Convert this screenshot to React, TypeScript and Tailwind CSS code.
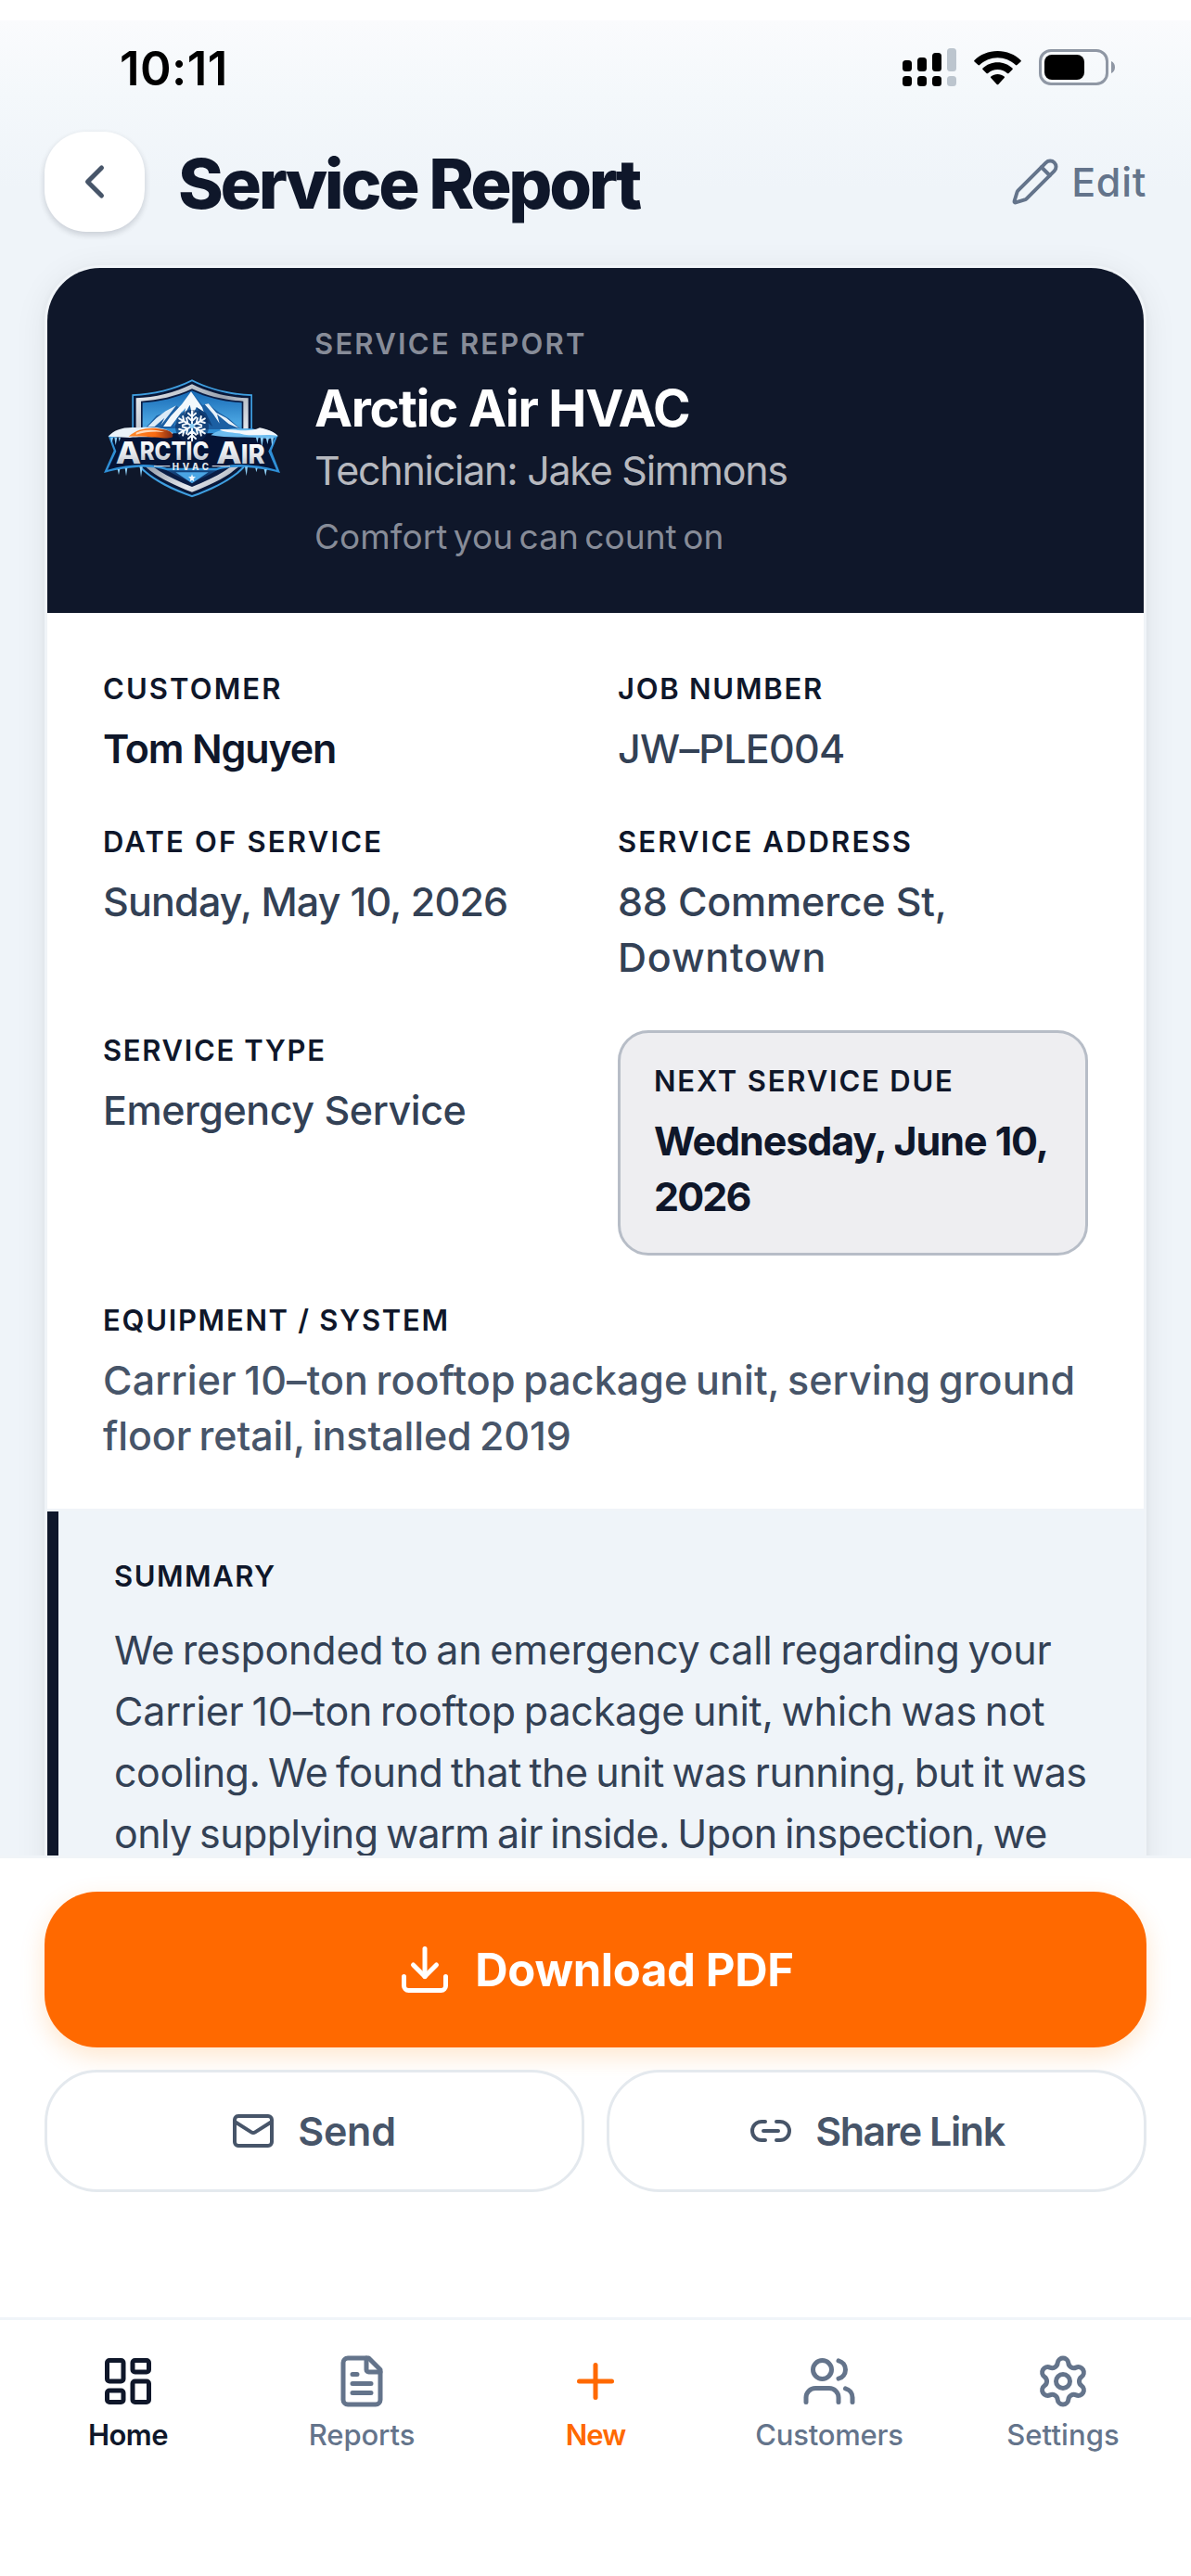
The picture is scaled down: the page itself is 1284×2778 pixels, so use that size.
import React from "react";
import { ChevronLeft, Download, Link2, Pencil, Plus, Settings, Users } from "lucide-react";

function StatusBar() {
  return (
    <div className="flex h-[102px] items-center justify-between pr-[82px] pl-[129px]">
      <span className="text-[51px] leading-none font-semibold tracking-[0.4px] text-black">
        10:11
      </span>
      <div className="flex items-center gap-[19px]">
        <svg width="58" height="42" viewBox="0 0 58 42" fill="#000">
          <rect x="0" y="13" width="10" height="12" rx="3.5" />
          <rect x="16" y="10" width="10" height="15" rx="3.5" />
          <rect x="32" y="5" width="10" height="20" rx="3.5" />
          <rect x="48" y="0" width="10" height="25" rx="3.5" fill="#bcc5ce" />
          <rect x="0" y="30" width="10" height="11" rx="3.5" />
          <rect x="16" y="30" width="10" height="11" rx="3.5" />
          <rect x="32" y="30" width="10" height="11" rx="3.5" />
          <rect x="48" y="30" width="10" height="11" rx="3.5" fill="#bcc5ce" />
        </svg>
        <svg width="51" height="38" viewBox="0 0 51 38" fill="#000">
          <path d="M25.5 1C35.300 1 44.200 4.700 50.500 11a1 1 0 0 1 0 1.400l-4 3.700a1.200 1.200 0 0 1-1.600 0C39.500 11 32.800 8.200 25.500 8.200S11.500 11 6.100 16.100a1.200 1.200 0 0 1-1.600 0l-4-3.700a1 1 0 0 1 0-1.400C6.800 4.700 15.700 1 25.500 1Z" />
          <path d="M25.500 13.200c6.200 0 11.800 2.400 16 6.300a1 1 0 0 1 0 1.400l-4 4a1.200 1.200 0 0 1-1.600 0c-2.800-2.500-6.400-4-10.400-4s-7.600 1.500-10.400 4a1.200 1.200 0 0 1-1.600 0l-4-4a1 1 0 0 1 0-1.400c4.200-3.900 9.800-6.300 16-6.300Z" />
          <path d="M25.500 26c2.700 0 5.200 1 7.200 2.600a1 1 0 0 1 0 1.500l-6.400 6.800a1.100 1.100 0 0 1-1.600 0l-6.400-6.800a1 1 0 0 1 0-1.500C20.300 27 22.800 26 25.500 26Z" />
        </svg>
        <svg width="82" height="40" viewBox="0 0 82 40">
          <rect x="1.500" y="1.500" width="72" height="36" rx="11.500" fill="none" stroke="#8f97a4" strokeWidth="3" />
          <rect x="6" y="6" width="43" height="27" rx="8" fill="#000" />
          <path d="M78 13c2.500 1 4 3.500 4 6.500S80.500 25 78 26Z" fill="#8f97a4" />
        </svg>
      </div>
    </div>
  );
}

function Header() {
  return (
    <header className="mt-[18px] flex h-[108px] items-center px-12">
      <button className="flex size-[108px] items-center justify-center rounded-[45px] bg-white text-[#475569] shadow-[0_3px_6px_rgba(15,23,42,0.12),0_3px_9px_rgba(15,23,42,0.06)]">
        <ChevronLeft size={60} strokeWidth={2} />
      </button>
      <h1 className="ml-9 pt-[3px] text-[74px] leading-none font-extrabold tracking-[-3.3px] text-[#0f172a]">
        Service Report
      </h1>
      <button className="ml-auto flex items-center gap-3 text-[#64748b]">
        <Pencil size={54} strokeWidth={1.75} />
        <span className="text-[43px] leading-none font-medium tracking-[0.7px]">Edit</span>
      </button>
    </header>
  );
}

const spokes = [0, 60, 120, 180, 240, 300];
const icicles = [
  "M88 275l4 18 4-18Z",
  "M100 275l4 26 5-26Z",
  "M113 275l3 14 4-14Z",
  "M558 275l4 18 4-18Z",
  "M572 275l5 32 5-32Z",
  "M590 275l5 22 5-22Z",
  "M606 275l4 30 5-30Z",
  "M110 378l4 18 4-18Z",
  "M134 374l4 26 4-26Z",
  "M182 370l4 34 5-34Z",
  "M522 370l5 30 4-30Z",
  "M556 374l3 14 4-14Z",
  "M584 378l5 22 4-22Z",
];

// the first letter of each word is taller than the rest
const lettering = [
  { text: "A", x: 104, y: 360, size: 98, width: 82 },
  { text: "RCTIC", x: 182, y: 348, size: 80, width: 224 },
  { text: "A", x: 430, y: 360, size: 98, width: 82 },
  { text: "IR", x: 509, y: 360, size: 86, width: 78 },
];

function CompanyLogo() {
  return (
    <svg className="size-48 shrink-0" viewBox="63 -3 576 576">
      <defs>
        <linearGradient id="sky" x1="0" y1="0" x2="0" y2="1">
          <stop offset="0" stopColor="#1668b4" />
          <stop offset="0.35" stopColor="#4ba6e2" />
          <stop offset="0.6" stopColor="#2b7fc6" />
          <stop offset="1" stopColor="#0b2a5c" />
        </linearGradient>
        <linearGradient id="steel" x1="0" y1="0" x2="1" y2="1">
          <stop offset="0" stopColor="#f1f3f6" />
          <stop offset="0.45" stopColor="#9aa3b0" />
          <stop offset="0.7" stopColor="#e5e8ed" />
          <stop offset="1" stopColor="#8b94a3" />
        </linearGradient>
        <linearGradient id="lettering" x1="0" y1="0" x2="0" y2="1">
          <stop offset="0.2" stopColor="#ffffff" />
          <stop offset="0.6" stopColor="#dde1e7" />
          <stop offset="0.85" stopColor="#b9c0ca" />
        </linearGradient>
        <linearGradient id="flame" x1="0" y1="0" x2="1" y2="0">
          <stop offset="0" stopColor="#ff8a2a" />
          <stop offset="0.6" stopColor="#f96a10" />
          <stop offset="1" stopColor="#7e2a17" />
        </linearGradient>
      </defs>

      {/* shield */}
      <path d="M351 88C410 118 478 134 546 136V330C530 386 450 434 351 469C252 434 172 386 157 330V136C224 134 292 118 351 88Z" fill="#3f9fe0" />
      <path d="M351 94C410 123 476 139 541 141V328C525 382 446 428 351 462C256 428 177 382 162 328V141C226 139 292 123 351 94Z" fill="#08183a" />
      <path d="M351 103C408 131 470 146 533 148V324C518 374 442 418 351 452C260 418 184 374 170 324V148C232 146 294 131 351 103Z" fill="url(#steel)" />
      <path d="M351 118C404 143 460 155 517 158V318C504 364 434 402 351 435C268 402 198 364 186 318V158C242 155 298 143 351 118Z" fill="#0a1d45" />
      <path d="M351 124C402 148 456 160 512 163V300C500 350 430 386 351 422C272 386 202 350 191 300V163C246 160 300 148 351 124Z" fill="url(#sky)" />

      {/* mountains */}
      <path d="M196 250L236 205L262 196L300 172L322 190L348 127L386 172L400 164L440 196L470 214L510 250Z" fill="#1b5fa3" />
      <path d="M348 127L318 168L282 206L258 240H282L320 190L316 220L344 170L352 205L366 176L400 224L384 178Z" fill="#f3f8fc" />
      <path d="M300 172L266 190L236 212L208 240H230L262 212L250 236Z" fill="#dcebf7" />
      <path d="M392 168L420 200L440 230L432 200L470 232L504 246L462 212L430 196L404 166Z" fill="#e8f2fa" />
      <path d="M366 178L384 214L418 240L396 196Z" fill="#0f3f78" />
      <path d="M330 180L302 214L290 240L324 214Z" fill="#2e82c8" />

      {/* ribbon */}
      <path d="M80 270L160 246H300L400 250L545 246L628 270L608 318L636 390C560 370 480 364 430 382H270C220 364 142 370 66 390L98 318Z" fill="#2f8fd6" />
      <path d="M90 278L160 262H290L400 262L545 262L618 278L598 320L624 380C560 362 484 356 430 374H270C216 356 142 362 78 380L106 320Z" fill="#051436" />
      <path d="M80 272C100 250 130 240 176 244C230 236 270 246 290 262C270 280 200 270 150 276Z" fill="#eaf2f9" />
      <path d="M146 272C176 244 222 240 262 250C280 254 292 262 288 274C274 284 220 268 146 272Z" fill="url(#flame)" />
      <path d="M170 260C200 246 236 250 262 258C226 254 200 258 170 266Z" fill="#ffd9b8" />
      <path d="M412 268C440 244 500 244 556 250L588 250C606 254 622 262 629 272L600 280C540 270 470 280 412 268Z" fill="#6dbdf0" />
      <path d="M440 250C490 246 530 262 570 244C600 250 620 260 629 270C590 262 560 272 520 266C490 258 460 262 440 250Z" fill="#f4f8fc" />
      <g fill="#8fd0f6">
        {icicles.map((d) => (
          <path key={d} d={d} />
        ))}
      </g>

      {/* snowflake */}
      <circle cx="351" cy="240" r="54" fill="#0c2a5a" fillOpacity="0.55" />
      <g stroke="#f4f9fd" strokeWidth="6" strokeLinecap="round" fill="none">
        {spokes.map((angle) => (
          <path
            key={angle}
            transform={`rotate(${angle} 351 238)`}
            d="M351 238V190M351 208L339 197M351 208L363 197M351 222L338 210M351 222L364 210"
          />
        ))}
      </g>
      <circle cx="351" cy="238" r="8" fill="#8fd0f6" />

      {lettering.map((part) => (
        <text
          key={part.x}
          x={part.x}
          y={part.y}
          fontSize={part.size}
          textLength={part.width}
          lengthAdjust="spacingAndGlyphs"
          className="font-['Inter',sans-serif] font-extrabold"
          fill="url(#lettering)"
        >
          {part.text}
        </text>
      ))}

      {/* lower plate */}
      <path d="M228 368H280M416 368H474" stroke="#c8ced7" strokeWidth="4" />
      <text x="287" y="382" fontSize="29" textLength="118" className="font-['Inter',sans-serif] font-extrabold" fill="#e3e7ec">
        HVAC
      </text>
      <path d="M298 388L351 424L404 388Z" fill="#4aa5e4" />
      <path d="M351 394l3 8 9 1-7 6 2 9-7-5-7 5 2-9-7-6 9-1Z" fill="#f4f9fd" />
    </svg>
  );
}

const label = "block text-[31px] leading-[44px] font-semibold text-[#0f172a]";
const value = "block mt-3 pb-px text-[43px] leading-[60px] whitespace-nowrap";

function JobDetails() {
  return (
    <div className="grid grid-cols-2 gap-12 bg-white px-[60px] pt-[60px] pb-12">
      <div>
        <span className={`${label} tracking-[2.1px]`}>CUSTOMER</span>
        <span className={`${value} font-semibold tracking-[-1.17px] text-[#0f172a]`}>
          Tom Nguyen
        </span>
      </div>
      <div>
        <span className={`${label} tracking-[1.75px]`}>JOB NUMBER</span>
        <span className={`${value} font-medium tracking-[-0.7px] text-[#334155]`}>JW–PLE004</span>
      </div>
      <div>
        <span className={`${label} tracking-[2.2px]`}>DATE OF SERVICE</span>
        <span className={`${value} font-medium tracking-[-0.8px] text-[#334155]`}>
          Sunday, May 10, 2026
        </span>
      </div>
      <div>
        <span className={`${label} tracking-[2.15px]`}>SERVICE ADDRESS</span>
        <span className={`${value} font-medium tracking-[-0.2px] text-[#334155]`}>
          88 Commerce St,
          <span className="block tracking-[0.8px]">Downtown</span>
        </span>
      </div>
      <div>
        <span className={`${label} tracking-[1.65px]`}>SERVICE TYPE</span>
        <span className={`${value} font-medium tracking-[-0.46px] text-[#334155]`}>
          Emergency Service
        </span>
      </div>
      <div className="rounded-[33px] border-3 border-[#b7bdc7] bg-[#eeeef1] px-9 py-[30px]">
        <span className={`${label} tracking-[1.8px]`}>NEXT SERVICE DUE</span>
        <span className={`${value} font-bold tracking-[-1.08px] text-[#0f172a]`}>
          Wednesday, June 10,
          <span className="block tracking-[-1.9px]">2026</span>
        </span>
      </div>
      <div className="col-span-2">
        <span className={`${label} tracking-[1.7px]`}>EQUIPMENT / SYSTEM</span>
        <span className={`${value} font-medium text-[#475569] [word-spacing:-3px]`}>
          <span className="block tracking-[0.1px]">
            Carrier 10–ton rooftop package unit, serving ground
          </span>
          <span className="block tracking-[-0.1px]">floor retail, installed 2019</span>
        </span>
      </div>
    </div>
  );
}

function Summary() {
  return (
    <div className="border-t-3 border-[#f0f4f8] bg-[#eff4f9]">
      <div className="border-l-12 border-[#0f172a] px-[60px] pt-12 pb-12">
        <span className={`${label} tracking-[1.5px]`}>SUMMARY</span>
        <p className="mt-6 text-[43px] leading-[66px] whitespace-nowrap text-[#334155] [word-spacing:-3px]">
          <span className="block tracking-[-0.2px]">
            We responded to an emergency call regarding your
          </span>
          <span className="block tracking-[-0.2px]">
            Carrier 10–ton rooftop package unit, which was not
          </span>
          <span className="block tracking-[-0.46px]">
            cooling. We found that the unit was running, but it was
          </span>
          <span className="block tracking-[-0.6px]">
            only supplying warm air inside. Upon inspection, we
          </span>
        </p>
      </div>
    </div>
  );
}

function ReportCard() {
  return (
    <div className="mx-12 mt-9 overflow-hidden rounded-t-[60px] border-x-3 border-t-3 border-[#f0f4f8] bg-[#f0f4f8] shadow-[0_6px_36px_rgba(0,0,0,0.07),0_3px_9px_rgba(0,0,0,0.05)]">
      <div className="flex h-[372px] items-center gap-9 bg-[#0f172a] px-[60px]">
        <CompanyLogo />
        <div className="whitespace-nowrap">
          <p className="text-[31px] leading-[50px] font-semibold tracking-[2.22px] text-[#878c98]">
            SERVICE REPORT
          </p>
          <p className="mt-[9px] text-[55px] leading-[70px] font-bold tracking-[-1.28px] text-white">
            Arctic Air HVAC
          </p>
          <p className="mt-0.5 text-[43px] leading-[60px] tracking-[-1.26px] text-[#b7b9bf]">
            Technician: Jake Simmons
          </p>
          <p className="mt-[17px] text-[37px] leading-[50px] tracking-[0.05px] text-[#878c98] [word-spacing:-4px]">
            Comfort you can count on
          </p>
        </div>
      </div>
      <JobDetails />
      <Summary />
    </div>
  );
}

function MailIcon() {
  return (
    <svg width="48" height="48" viewBox="0 0 24 24" fill="none" stroke="currentColor" strokeWidth="2" strokeLinecap="round" strokeLinejoin="round">
      <rect x="2" y="4" width="20" height="16" rx="2" />
      <path d="m22 7-8.970 5.700a1.940 1.940 0 0 1-2.060 0L2 7" />
    </svg>
  );
}

function Actions() {
  return (
    <div className="flex flex-col gap-6 px-12 pt-9">
      <button className="flex h-[168px] items-center justify-center gap-6 rounded-[57px] bg-[#ff6900] text-white shadow-[0_9px_27px_rgba(255,130,0,0.2)]">
        <Download size={60} strokeWidth={2} />
        <span className="text-[49px] leading-none font-bold tracking-[-0.35px]">Download PDF</span>
      </button>
      <div className="grid grid-cols-2 gap-6">
        <button className="flex h-[132px] items-center justify-center gap-6 rounded-[57px] border-3 border-[#e4e9ee] bg-white text-[#475569]">
          <MailIcon />
          <span className="pr-0.5 text-[43px] leading-none font-semibold tracking-[-0.3px]">Send</span>
        </button>
        <button className="flex h-[132px] items-center justify-center gap-6 rounded-[57px] border-3 border-[#e4e9ee] bg-white text-[#475569]">
          <Link2 size={48} strokeWidth={2} />
          <span className="text-[43px] leading-none font-semibold tracking-[-1.4px]">
            Share Link
          </span>
        </button>
      </div>
    </div>
  );
}

function HomeIcon() {
  return (
    <svg width="60" height="60" viewBox="0 0 24 24" fill="none" stroke="currentColor" strokeWidth="2" strokeLinecap="round" strokeLinejoin="round">
      <rect x="3" y="3" width="7" height="9" rx="1" />
      <rect x="14" y="3" width="7" height="5" rx="1" />
      <rect x="14" y="12" width="7" height="9" rx="1" />
      <rect x="3" y="16" width="7" height="5" rx="1" />
    </svg>
  );
}

function ReportsIcon() {
  return (
    <svg width="60" height="60" viewBox="0 0 24 24" fill="none" stroke="currentColor" strokeWidth="2" strokeLinecap="round" strokeLinejoin="round">
      <path d="M15 2H6a2 2 0 0 0-2 2v16a2 2 0 0 0 2 2h12a2 2 0 0 0 2-2V7Z" />
      <path d="M14 2v5a1 1 0 0 0 1 1h5M10 9H8M16 13H8M16 17H8" />
    </svg>
  );
}

const tabs = [
  { name: "Home", icon: <HomeIcon />, style: "text-[#0f172a] font-semibold tracking-[-0.5px]" },
  { name: "Reports", icon: <ReportsIcon />, style: "text-[#64748b] font-medium tracking-[-0.1px]" },
  { name: "New", icon: <Plus size={60} strokeWidth={2} />, style: "text-[#ff6900] font-semibold tracking-[-0.9px]" },
  { name: "Customers", icon: <Users size={60} strokeWidth={2} />, style: "text-[#64748b] font-medium tracking-[-0.2px]" },
  { name: "Settings", icon: <Settings size={60} strokeWidth={2} />, style: "text-[#64748b] font-medium tracking-[0.1px]" },
];

export default function App() {
  return (
    <div className="flex h-[2778px] w-[1284px] flex-col overflow-hidden bg-white font-['Inter',sans-serif]">
      <div className="mt-[22px] h-[1979px] shrink-0 overflow-hidden bg-[linear-gradient(to_bottom,#fafbfd_0px,#f4f8fb_80px,#eff4f9_180px)]">
        <StatusBar />
        <Header />
        <ReportCard />
      </div>
      <div className="h-[498px] shrink-0 border-t-3 border-[#f0f4f8]">
        <Actions />
      </div>
      <nav className="grid grow grid-cols-5 border-t-3 border-[#f0f4f8] px-3 pt-9">
        {tabs.map((tab) => (
          <div key={tab.name} className={`flex flex-col items-center gap-2 ${tab.style}`}>
            {tab.icon}
            <span className="text-[31px] leading-10">{tab.name}</span>
          </div>
        ))}
      </nav>
    </div>
  );
}
